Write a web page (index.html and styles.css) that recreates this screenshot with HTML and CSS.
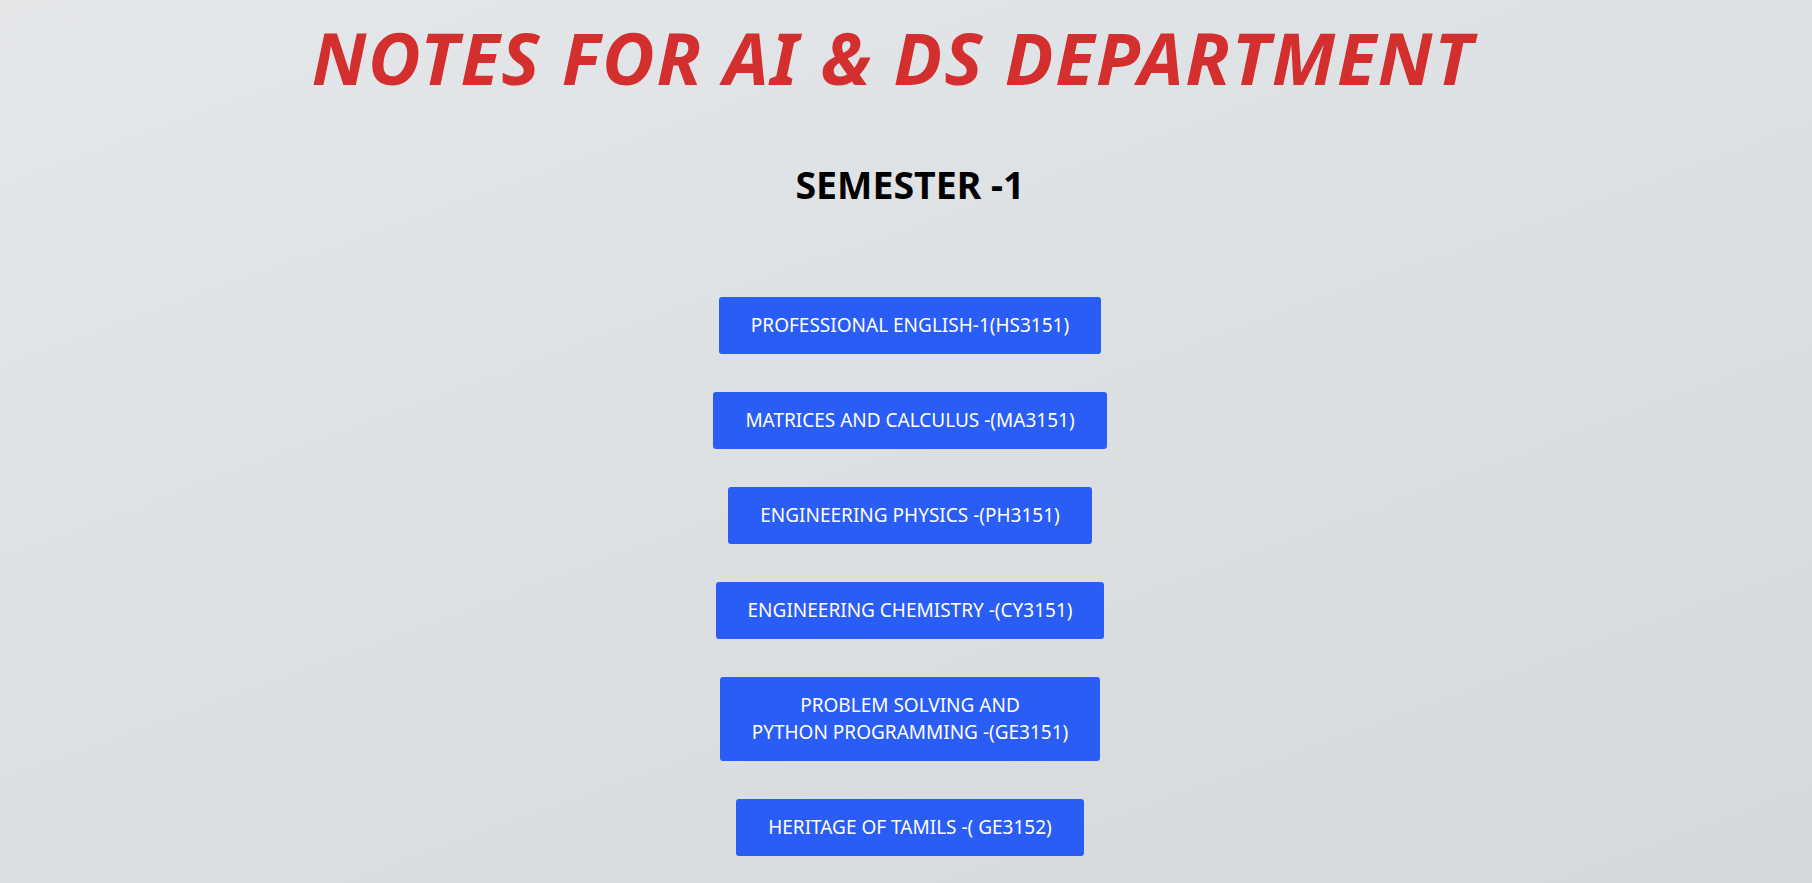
FILE: index.html
```html
<!DOCTYPE html>
<html lang="en">
<head>
<meta charset="utf-8">
<title>Notes for AI &amp; DS Department</title>
<link rel="stylesheet" href="styles.css">
</head>
<body>
<main class="page">
  <h1 class="title">NOTES FOR AI &amp; DS DEPARTMENT</h1>
  <h2 class="semester">SEMESTER -1</h2>
  <nav class="subjects">
    <a class="btn" href="#">PROFESSIONAL ENGLISH-1(HS3151)</a>
    <a class="btn" href="#">MATRICES AND CALCULUS -(MA3151)</a>
    <a class="btn" href="#">ENGINEERING PHYSICS -(PH3151)</a>
    <a class="btn" href="#">ENGINEERING CHEMISTRY -(CY3151)</a>
    <a class="btn" href="#">PROBLEM SOLVING AND<br>PYTHON PROGRAMMING -(GE3151)</a>
    <a class="btn" href="#">HERITAGE OF TAMILS -( GE3152)</a>
  </nav>
</main>
</body>
</html>
```

FILE: styles.css
```css
html, body {
  margin: 0;
  padding: 0;
}
body {
  min-height: 100vh;
  background: linear-gradient(160deg, #e5e7e9 0%, #d4d9dd 100%);
  font-family: "Noto Sans", "Open Sans", "Liberation Sans", sans-serif;
  color: #000;
}
.page {
  display: flex;
  flex-direction: column;
  align-items: center;
  padding: 14px 0 40px 8px;
}
.title {
  margin: 0;
  font-size: 72px;
  line-height: 1.2;
  font-weight: 700;
  font-style: italic;
  color: #d32f2f;
  letter-spacing: 1.8px;
  transform: translateX(-17px);
}
.semester {
  margin: 62px 0 0;
  font-size: 37.5px;
  font-weight: 700;
  line-height: 1.2;
}
.subjects {
  display: flex;
  flex-direction: column;
  align-items: center;
  gap: 38px;
  margin-top: 90px;
}
.btn {
  display: block;
  background: #2a5cf6;
  color: #fff;
  text-decoration: none;
  text-align: center;
  font-size: 19px;
  line-height: 27px;
  padding: 15px 32px;
  border-radius: 3px;
}
```
